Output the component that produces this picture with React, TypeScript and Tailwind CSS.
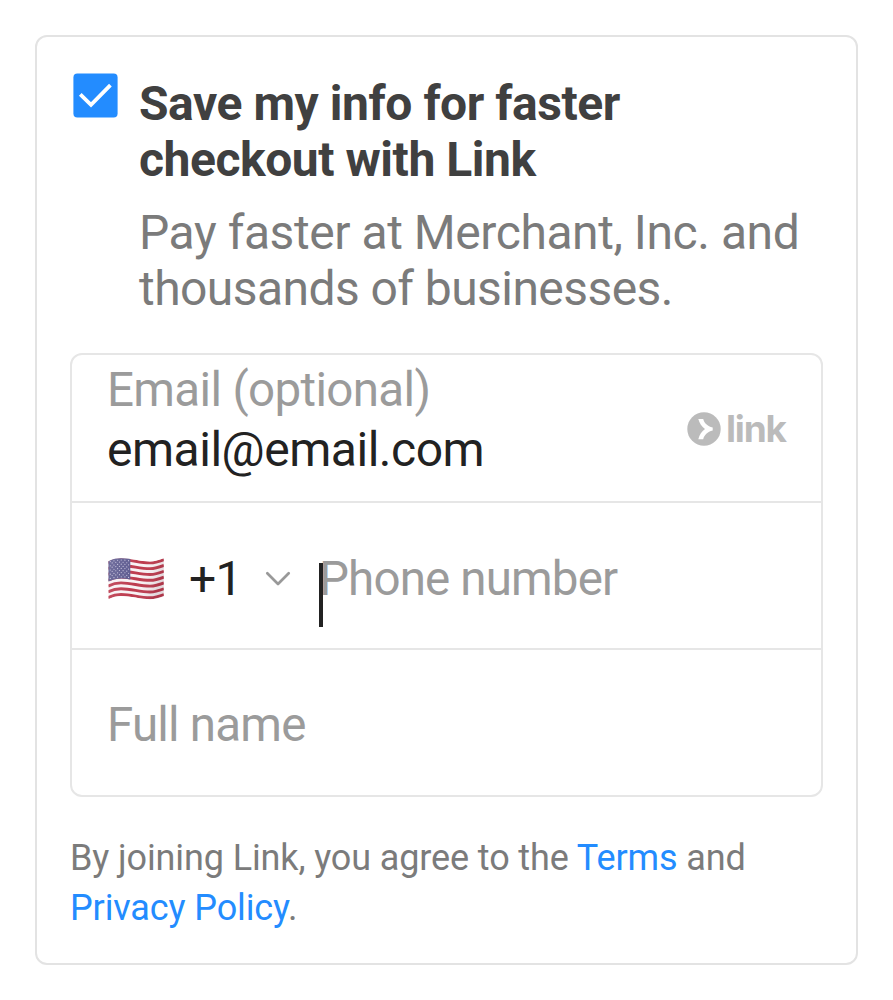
const stripeRows = [0, 2, 4, 6, 8, 10, 12];
const starRows = [0, 1, 2, 3, 4, 5, 6, 7, 8];
const H = 37.8 / 13;

function Flag() {
  return (
    <svg className="h-[42px] w-14 shrink-0" viewBox="0 0 56 42" aria-hidden="true">
      <defs>
        <clipPath id="flag">
          <path d="M0.5 3.2 C5 0.8 9 0.2 13 0.2 C24 0.2 31 3.4 42 3.4 C47 3.4 51 2.2 55.8 0.3 V38.2 C51 40.2 47 41.2 42 41.2 C31 41.2 24 38 13 38 C9 38 5 38.8 0.5 41.2Z" />
        </clipPath>
        <linearGradient id="shade" x1="0" x2="1" y1="0" y2="0.25">
          <stop offset="0.1" stopColor="#fff" stopOpacity="0.12" />
          <stop offset="0.6" stopColor="#fff" stopOpacity="0" />
          <stop offset="1" stopColor="#401828" stopOpacity="0.12" />
        </linearGradient>
      </defs>
      <g clipPath="url(#flag)">
        <rect width="56" height="42" fill="#f8f2f4" />
        {stripeRows.map((i) => (
          <path
            key={i}
            transform={`translate(0 ${i * H + H / 2})`}
            d="M0 3.4 C5 0.8 9 0.2 13 0.2 C24 0.2 31 3.4 42 3.4 C47 3.4 51 2.2 56 0.2"
            fill="none"
            stroke="#bd3b4e"
            strokeWidth={H}
          />
        ))}
        <path d="M0 0 H22.3 V21.6 C15 19.8 8 20.2 0 23.6Z" fill="#5b588e" />
        {starRows.map((r) =>
          [0, 1, 2, 3, 4, 5].slice(r % 2).map((c) => (
            <circle
              key={`${r}-${c}`}
              cx={2.3 + c * 3.65 - (r % 2) * 1.8}
              cy={3.6 + r * 2.1 - Math.sin(c / 2) * 1.6}
              r="0.6"
              fill="#c3bfda"
            />
          )),
        )}
        <rect width="56" height="42" fill="url(#shade)" />
      </g>
    </svg>
  );
}

function LinkLogo() {
  return (
    <div className="flex items-center text-[#bbbbbb]">
      <svg className="h-[34px] w-[34px]" viewBox="0 0 34 34" aria-hidden="true">
        <circle cx="17" cy="17" r="16.7" fill="currentColor" />
        <path d="M11.3 7H16.2C17.3 11.1 20.4 14.2 25.7 15.6V18.6C20.4 20 17.3 23.1 16.2 27.2H11.3C12.5 22.9 14.7 19.5 18 17.1C14.7 14.7 12.5 11.3 11.3 7Z" fill="#fff" />
      </svg>
      <span className="ml-[5px] w-[61px] font-['Inter',sans-serif] text-[37px] leading-[34px] font-bold tracking-[-1.2px]">link</span>
    </div>
  );
}

export default function App() {
  return (
    <main className="h-[1000px] w-[893px] bg-white p-[35px] font-['Roboto',sans-serif] whitespace-nowrap">
      <section className="h-[930px] w-[823px] rounded-[12px] border-2 border-[#e3e3e3] px-[33px] pt-[36px]">
        <div className="flex h-[280px]">
          <svg className="ml-[3px] h-[45px] w-[45px] shrink-0" viewBox="0 0 45 45" fill="none" role="checkbox" aria-checked="true">
            <rect x="0.4" y="0.4" width="44.2" height="44.2" rx="4" fill="#238cff" />
            <path d="M7.3 21.3L18 31.8L37.4 12.2" stroke="#fff" strokeWidth="3.8" />
          </svg>
          <div className="ml-[21px] pt-[3px]">
            <h1 className="text-[48px] leading-[56px] font-bold tracking-[-0.45px] text-[#404040]">
              Save my info for faster<br />checkout with Link
            </h1>
            <p className="mt-[17px] text-[48px] leading-[56px] tracking-[-0.44px] text-[#7b7b7b]">
              Pay faster at Merchant, Inc. and<br /><span className="tracking-[-0.56px]">thousands of businesses.</span>
            </p>
          </div>
        </div>

        <div className="h-[444px] w-[753px] rounded-[12px] border-2 border-[#e6e6e6] text-[48px] leading-[56px]">
          <div className="flex h-[148px] justify-between border-b-2 border-[#e6e6e6] pr-[34px] pl-[35px]">
            <div className="pt-[7px]">
              <div className="text-[47.5px] tracking-[-0.65px] text-[#9b9b9b]">Email (optional)</div>
              <div className="mt-[4px] tracking-[-0.48px] text-[#222222]">email@email.com</div>
            </div>
            <div className="pt-[57px]"><LinkLogo /></div>
          </div>
          <div className="flex h-[147px] items-center border-b-2 border-[#e6e6e6] pt-[6px] pl-[36px]">
            <Flag />
            <span className="ml-[25px] w-[51px] pt-[1px] tracking-[-0.8px] text-[#222222]">+1</span>
            <svg className="ml-[25px] h-[16px] w-[26px]" viewBox="0 0 26 16" fill="none" stroke="#999" strokeWidth="2.7" strokeLinecap="round" strokeLinejoin="round" aria-hidden="true">
              <path d="M2.3 2.3L13 13L23.7 2.3" />
            </svg>
            <div className="relative ml-[28px] text-[47.5px] tracking-[-0.85px] text-[#9b9b9b]">
              <span className="absolute top-[12px] left-0 h-[64px] w-[4px] bg-[#222222]" />
              Phone number
            </div>
          </div>
          <div className="flex h-[145px] items-center pt-[4px] pl-[35px] text-[47.5px] tracking-[-0.8px] text-[#9b9b9b]">Full name</div>
        </div>

        <p className="mt-[36px] text-[36px] leading-[50px] tracking-[-0.12px] text-[#7b7b7b]">
          By joining Link, you agree to the <a className="text-[#238cff]">Terms</a> and<br />
          <a className="text-[#238cff]">Privacy Policy</a>.
        </p>
      </section>
    </main>
  );
}
